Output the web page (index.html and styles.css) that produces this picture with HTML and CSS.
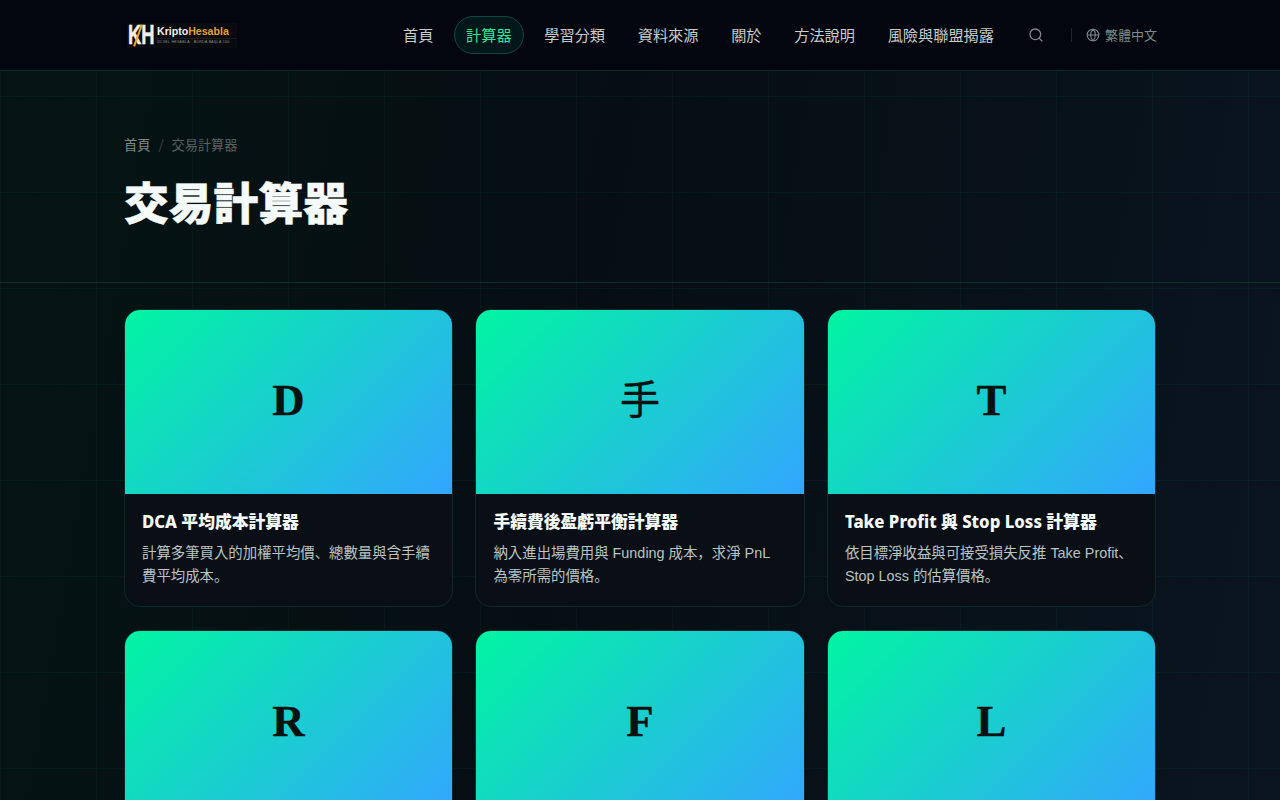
FILE: index.html
```html
<!DOCTYPE html>
<html>
  <head>
    <meta charset="utf-8">
    <meta name="viewport" content="width=device-width, initial-scale=1">
    <title>交易計算器</title>
    <link rel="stylesheet" href="styles.css">
  </head>
  <body>
    <header class="site-header">
      <div class="header-inner">
        <a class="logo" href="#">
          <span class="logo-mark"><span class="logo-letters">KH</span><i class="logo-slash"></i></span>
          <span class="logo-text">
            <span class="logo-name">Kripto<b>Hesabla</b></span>
            <span class="logo-tag">ÜCVEL HESABLA · BURDA BAŞLA 100</span>
          </span>
        </a>
        <nav class="main-nav">
          <a href="#">首頁</a>
          <a href="#" class="active">計算器</a>
          <a href="#">學習分類</a>
          <a href="#">資料來源</a>
          <a href="#">關於</a>
          <a href="#">方法說明</a>
          <a href="#">風險與聯盟揭露</a>
        </nav>
        <button class="search-btn" aria-label="搜尋">
          <svg width="16" height="16" viewBox="0 0 24 24" fill="none" stroke="currentColor" stroke-width="2" stroke-linecap="round"><circle cx="11" cy="11" r="8"/><path d="M21 21l-4.300-4.300"/></svg>
        </button>
        <a class="lang" href="#">
          <svg width="14" height="14" viewBox="0 0 24 24" fill="none" stroke="currentColor" stroke-width="1.800"><circle cx="12" cy="12" r="10"/><path d="M2 12h20M12 2c3 3 4 6.500 4 10s-1 7-4 10c-3-3-4-6.500-4-10s1-7 4-10z"/></svg>
          繁體中文
        </a>
      </div>
    </header>

    <section class="hero">
      <div class="container">
        <div class="breadcrumb"><a href="#">首頁</a><span class="sep">/</span><span>交易計算器</span></div>
        <h1>交易計算器</h1>
      </div>
    </section>

    <main class="container card-grid">
      <article class="card">
        <div class="thumb">D</div>
        <div class="card-body">
          <h2>DCA 平均成本計算器</h2>
          <p>計算多筆買入的加權平均價、總數量與含手續費平均成本。</p>
        </div>
      </article>
      <article class="card">
        <div class="thumb thumb-cjk">手</div>
        <div class="card-body">
          <h2>手續費後盈虧平衡計算器</h2>
          <p>納入進出場費用與 Funding 成本，求淨 PnL 為零所需的價格。</p>
        </div>
      </article>
      <article class="card">
        <div class="thumb">T</div>
        <div class="card-body">
          <h2>Take Profit 與 Stop Loss 計算器</h2>
          <p>依目標淨收益與可接受損失反推 Take Profit、Stop Loss 的估算價格。</p>
        </div>
      </article>
      <article class="card">
        <div class="thumb">R</div>
      </article>
      <article class="card">
        <div class="thumb">F</div>
      </article>
      <article class="card">
        <div class="thumb">L</div>
      </article>
    </main>
  </body>
</html>
```

FILE: styles.css
```css
html, body {
  margin: 0;
  padding: 0;
}
body {
  font-family: "Noto Sans CJK JP", sans-serif;
  color: #e8f0ee;
  background-color: #060d14;
  background-image:
    linear-gradient(rgba(0, 255, 170, 0.04) 1px, transparent 1px),
    linear-gradient(90deg, rgba(0, 255, 170, 0.04) 1px, transparent 1px),
    linear-gradient(100deg, #051413 0%, #060e13 45%, #0a1520 100%);
  background-size: 96px 96px, 96px 96px, 100% 100%;
  background-attachment: fixed;
}
a {
  color: inherit;
  text-decoration: none;
}
.container {
  width: 1032px;
  margin: 0 auto;
}

/* header */
.site-header {
  height: 70px;
  background: #03060e;
  border-bottom: 1px solid #0c2a26;
}
.header-inner {
  width: 1032px;
  height: 70px;
  margin: 0 auto;
  display: flex;
  align-items: center;
}
.logo {
  display: flex;
  align-items: center;
  gap: 5px;
  margin-left: 3px;
  padding: 2px 0 2px 1px;
  background: #090b0f;
}
.logo-mark {
  position: relative;
  width: 24px;
  height: 21px;
}
.logo-letters {
  display: block;
  font: 700 27px/21px "Liberation Sans", sans-serif;
  color: #f4efe6;
  -webkit-text-stroke: 0.5px #f4efe6;
  transform: scaleX(0.68);
  transform-origin: left center;
  white-space: nowrap;
}
.logo-slash {
  position: absolute;
  left: 9px;
  top: -1px;
  width: 2px;
  height: 23px;
  background: #e8a52c;
  transform: rotate(20deg);
}
.logo-text {
  display: flex;
  flex-direction: column;
  gap: 1px;
  width: 80px;
}
.logo-name {
  font-family: "Liberation Sans", sans-serif;
  font-size: 10.6px;
  line-height: 12px;
  font-weight: 700;
  color: #f2f2ee;
}
.logo-name b {
  color: #e3a12e;
}
.logo-tag {
  font-family: "Liberation Sans", sans-serif;
  font-size: 3.5px;
  line-height: 6px;
  letter-spacing: 0.32px;
  color: #8d9392;
  white-space: nowrap;
  border-top: 1px solid #1b1d1c;
}
.main-nav {
  margin-left: auto;
  display: flex;
  align-items: center;
  gap: 8.7px;
}
.main-nav a {
  font-size: 15.2px;
  line-height: 34px;
  padding: 0 11px 2px;
  color: #c6ccca;
  border: 1px solid transparent;
  border-radius: 19px;
}
.main-nav a.active {
  color: #2fe39a;
  border-color: #0e4a3c;
  background: rgba(0, 255, 170, 0.07);
}
.search-btn {
  display: flex;
  margin-left: 22px;
  padding: 0;
  border: 0;
  background: none;
  color: #7d8a8b;
}
.lang {
  display: flex;
  align-items: center;
  gap: 5px;
  margin-left: 27px;
  margin-right: -1px;
  padding-left: 15px;
  font-size: 13px;
  line-height: 16px;
  color: #7d8a8b;
  position: relative;
}
.lang::before {
  content: "";
  position: absolute;
  left: 0;
  top: 1px;
  width: 1px;
  height: 14px;
  background: #1a2a2c;
}

/* hero */
.hero {
  height: 211px;
  border-bottom: 1px solid #0e2c28;
}
.breadcrumb {
  padding-top: 66px;
  font-size: 13.2px;
  line-height: 16px;
  color: #7d8a88;
  display: flex;
}
.breadcrumb span:last-child {
  color: #566360;
}
.sep {
  margin: 0 8px;
  color: #3c4744;
}
h1 {
  margin: 20px 0 0;
  font-size: 44.8px;
  line-height: 56px;
  font-weight: 900;
  color: #f5fbf9;
  -webkit-text-stroke: 0.5px #f5fbf9;
}

/* cards */
.card-grid {
  display: grid;
  grid-template-columns: repeat(3, 1fr);
  column-gap: 22.4px;
  row-gap: 23px;
  padding-top: 26px;
}
.card {
  background: #0a0f16;
  border: 1px solid #10282a;
  border-radius: 16px;
  overflow: hidden;
}
.thumb {
  height: 185px;
  margin: -1px -1px 0;
  padding-bottom: 4px;
  box-sizing: border-box;
  display: flex;
  align-items: center;
  justify-content: center;
  background: linear-gradient(135deg, #00f5a0 0%, #33a6ff 100%);
  color: #07110f;
  font-family: "Liberation Serif", "Noto Sans CJK JP", serif;
  font-size: 44.8px;
  font-weight: 700;
  -webkit-text-stroke: 0.4px #07110f;
}
.thumb-cjk {
  padding-bottom: 10px;
  font-family: "Noto Sans CJK JP", sans-serif;
  font-size: 40px;
  font-weight: 400;
}
.card-body {
  padding: 16px 17px 18px;
}
h2 {
  margin: 0 0 8px;
  font-family: "Noto Sans", "Noto Sans CJK JP", sans-serif;
  font-size: 16.8px;
  line-height: 24px;
  font-weight: 800;
  color: #f5fbf9;
}
.card-body p {
  margin: 0;
  font-family: "Liberation Sans", "Noto Sans CJK JP", sans-serif;
  font-size: 14.4px;
  line-height: 23px;
  color: #b9c3c2;
}
```
